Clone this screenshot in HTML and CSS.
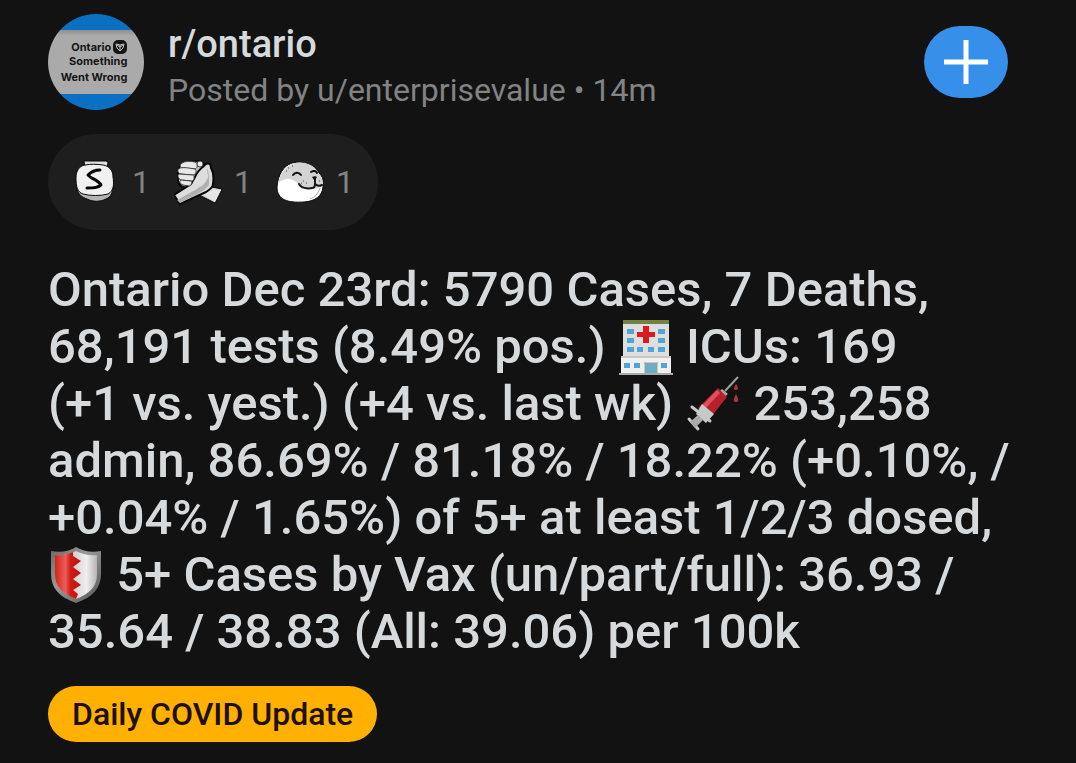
FILE: index.html
```html
<!DOCTYPE html>
<html lang="en">
<head>
<meta charset="utf-8">
<meta name="viewport" content="width=device-width, initial-scale=1">
<title>r/ontario</title>
<link rel="stylesheet" href="styles.css">
</head>
<body>

<article class="post">

<header class="post-header">
  <div class="avatar">
    <div class="avatar-text">
      <div class="avatar-line">Ontario
        <svg class="trillium" viewBox="0 0 14 14" aria-hidden="true">
          <rect width="14" height="14" rx="5" fill="#161616"/>
          <path d="M3 4l4 1 4-1-1 4-3 3-3-3zM7 5v5M4 5l3 2 3-2" fill="none" stroke="#c8c8c8"/>
        </svg>
      </div>
      <div class="avatar-line">Something</div>
      <div class="avatar-line last">Went Wrong</div>
    </div>
  </div>
  <div class="meta">
    <a class="subreddit" href="#">r/ontario</a>
    <div class="byline">Posted by u/enterprisevalue • 14m</div>
  </div>
  <button class="join" type="button" aria-label="Join">
    <svg viewBox="0 0 44 44" aria-hidden="true"><path d="M22 0v44M0 22h44" stroke="#fff" stroke-width="5"/></svg>
  </button>
</header>

<div class="awards">
  <div class="award">
    <svg viewBox="0 0 48 48" aria-hidden="true">
      <path d="M12 3h22l2 1-1 7H13z" fill="#dedede" stroke="#090909"/>
      <path d="M5 30c1 7 5 9 10 11 6 3 13 3 19 0 5-2 7-7 7-13z" fill="#b5b5b5" stroke="#090909"/>
      <path d="M13 7C7 8 4 13 4 20c0 8 1 14 7 16 7 2 18 2 25 0 6-3 6-10 5-17 0-7-4-11-10-12-7-1-12-1-18 0z" fill="#f1f1f1" stroke="#090909"/>
      <path d="M28 12c-5 0-9 2-12 5 2 3 10 5 13 10-3 3-8 3-14 3" fill="none" stroke="#050505" stroke-width="3" stroke-linecap="round" stroke-linejoin="round"/>
    </svg>
    <span>1</span>
  </div>
  <div class="award">
    <svg viewBox="0 0 48 48" aria-hidden="true">
      <path d="M28 27l20 4-7 14-18-9z" fill="#d0d0d0" stroke="#080808"/>
      <path d="M28 36l6-5 13 1-6 12z" fill="#e5e5e5"/>
      <path d="M4 12c1-5 6-8 11-8l10-1c4 0 6 3 5 7l-6 16-9 4c-6 0-10-3-11-7z" fill="#c4c4c4" stroke="#080808" stroke-width="2"/>
      <path d="M0 37l17-11 4-7c2-5 5-8 9-11 3-4 7-3 7 2 3 5 3 9 2 16 0 4-4 6-7 8L6 46z" fill="#ddd" stroke="#080808" stroke-width="2"/>
      <path d="M3 42l20-11c7-3 10-8 12-13v9c-3 4-5 5-8 7L6 45z" fill="#b0b0b0"/>
      <g fill="#e8e8e8" stroke="#404040">
        <path d="M8 5c3-2 8-2 13-1 3 1 3 6 0 7L10 10c-4 0-5-3-2-5z"/>
        <path d="M6 10c4-1 9 0 15 1 2 1 1 6-2 6L7 16c-4-1-4-5-1-6z"/>
        <path d="M5 16l14 1c2 1 1 6-1 6L7 22c-3-1-4-5-2-6z"/>
        <path d="M7 22l10 1c2 1 0 5-2 5l-6-1c-3-1-4-4-2-5z"/>
        <circle cx="26" cy="6" r="3"/>
      </g>
      <path d="M33 11l2 8-5 8-7 4" fill="none" stroke="#b4b4b4"/>
    </svg>
    <span>1</span>
  </div>
  <div class="award">
    <svg viewBox="0 0 48 48" aria-hidden="true">
      <path d="M1 29C2 17 7 8 16 5c12-3 23 2 27 10 4 4 5 8 4 14-1 9-7 14-19 15C12 45 1 42 1 29z" fill="#fff" stroke="#070707"/>
      <path d="M2 25C5 14 10 7 20 5c11-2 20 4 22 10 4 4 5 8 4 13-4 3-12 5-19 2-5-3-7-8-13-9-5-1-9 2-12 4z" fill="#d3d3d3"/>
      <path d="M17 17c2-3 6-3 8 0M35 14c3-2 5-1 6 1" fill="none" stroke="#111" stroke-width="2" stroke-linecap="round"/>
      <path d="M36 19c2-1 4-1 5 0l-2 3h-1z" fill="#111"/>
      <path d="M39 21v5M23 26c2 4 8 5 13 4 2 0 3-2 3-4 2 2 5 2 7 1" fill="none" stroke="#171717" stroke-linecap="round" stroke-width="2"/>
      <path d="M27 23h1M25 25h1M30 25h1M43 23h1M12 10h1M16 8h1M10 13h1" stroke="#444"/>
      <path d="M44 30c-2 6-5 9-10 11" fill="none" stroke="#aaa"/>
    </svg>
    <span>1</span>
  </div>
</div>

<h1 class="title">
  Ontario Dec 23rd: 5790 Cases, 7 Deaths,<br>
  68,191 tests (8.49% pos.)
  <svg class="emoji" viewBox="0 0 54 56" role="img" aria-label="hospital">
    <path d="M4 2h46v37H4z" fill="#dedfdd"/>
    <path d="M4 1h46v4H4z" fill="#75813f"/>
    <path d="M2 38h50v16H2z" fill="#f0f0ef"/>
    <path d="M2 37h50v2H2z" fill="#c8c6c8"/>
    <path d="M0 54h54v2H0z" fill="#aaa9ae"/>
    <path d="M24 7h6v6h6v5h-6v6h-6v-6h-6v-5h6z" fill="#d91b21"/>
    <path d="M8 10h7v5H8zM39 10h7v5h-7zM8 19h7v5H8zM39 19h7v5h-7zM8 28h7v5H8zM18 28h6v5h-6zM29 28h6v5h-6zM39 28h7v5h-7zM5 44h6v5H5zM15 44h6v5h-6zM42 44h6v5h-6z" fill="#4da5dc"/>
    <path d="M26 44h12v10H26z" fill="#65b2c4"/>
    <path d="M25 44h14M26 44v10M32 45v9M38 44v10" stroke="#9b9ea2" stroke-width="1"/>
  </svg>
  ICUs: 169<br>
  (+1 vs. yest.) (+4 vs. last wk)
  <svg class="emoji" viewBox="0 0 54 56" role="img" aria-label="syringe">
    <path d="M39 15L52 1" stroke="#9e9fa1" stroke-width="2"/>
    <path d="M36 13l6 5-6 5-5-6z" fill="#a4aaa5"/>
    <path d="M32 12l9 9-17 21-12-10z" fill="#b7202c"/>
    <path d="M31 14l3 3-17 18-3-3z" fill="#e0525a"/>
    <path d="M16 28l12 10-8 9-10-9z" fill="#c8c9ca"/>
    <path d="M6 31l18 14M3 43l9 10" stroke="#c8c8c8" stroke-width="3" stroke-linecap="round"/>
    <path d="M12 39l5 5-8 8-5-6z" fill="#aaa"/>
    <path d="M50 8c-3 5-2 6 0 6s3-2 0-6zM50 18c-3 6-3 8 0 8s3-2 0-8z" fill="#b8323b"/>
  </svg>
  253,258<br>
  admin, 86.69% / 81.18% / 18.22% (+0.10%, /<br>
  +0.04% / 1.65%) of 5+ at least 1/2/3 dosed,<br>
  <svg class="emoji" viewBox="0 0 54 56" role="img" aria-label="shield">
    <defs>
      <linearGradient id="rim" x2="1" y2="1"><stop stop-color="#666"/><stop offset=".4" stop-color="#999"/><stop offset="1" stop-color="#555"/></linearGradient>
      <linearGradient id="red"><stop stop-color="#d9201a"/><stop offset=".4" stop-color="#ea5f5a"/><stop offset=".6" stop-color="#cf1a15"/><stop offset="1" stop-color="#c5120d"/></linearGradient>
      <linearGradient id="silver"><stop stop-color="#aaa"/><stop offset=".75" stop-color="#eee"/><stop offset="1" stop-color="#b5b5b5"/></linearGradient>
    </defs>
    <path d="M2 4c10 2 19 0 25-4 7 4 15 6 25 4v23c0 14-8 23-25 29C10 50 2 41 2 27z" fill="url(#rim)"/>
    <path d="M6 8c8 1 15-1 21-4 6 3 13 5 21 4v19c0 12-6 19-21 25C12 46 6 39 6 27z" fill="url(#silver)"/>
    <path d="M6 8c7 1 13-1 18-3v4l8 5-8 6 8 6-8 6 8 6-8 5 5 4-2 5C12 46 6 39 6 27z" fill="url(#red)"/>
  </svg>
  5+ Cases by Vax (un/part/full): 36.93 /<br>
  35.64 / 38.83 (All: 39.06) per 100k
</h1>

<a class="flair" href="#">Daily COVID Update</a>

</article>

</body>
</html>
```
FILE: styles.css
```css
body {
  margin: 0;
  background: #121212;
  color: #d7dadc;
  font-family: Roboto, sans-serif;
}

.post {
  padding: 14px 48px 20px;
}

.post-header {
  display: flex;
  align-items: center;
  padding-right: 20px;
}

.avatar {
  display: flex;
  align-items: center;
  justify-content: center;
  box-sizing: border-box;
  width: 96px;
  height: 96px;
  padding-right: 4px;
  border-radius: 50%;
  background: linear-gradient(#0b70c2 16px, #8f8f8f 16px, #aaa 22px, #aaa 80px, #0b70c2 80px);
}

.avatar-text {
  color: #161616;
  font: bold 11px/14px Inter, sans-serif;
}

.avatar-line {
  display: flex;
  align-items: center;
  justify-content: flex-end;
  gap: 2px;
}

.avatar-line.last {
  padding-top: 2px;
}

.trillium {
  width: 14px;
  height: 14px;
}

.meta {
  display: flex;
  flex: 1;
  flex-direction: column;
  gap: 4px;
  padding: 8px 0 0 24px;
}

.subreddit {
  color: #d7dadc;
  font-size: 38px;
  font-weight: 500;
  line-height: 44px;
  text-decoration: none;
}

.byline {
  color: #818384;
  font-size: 32px;
  line-height: 40px;
}

.join {
  display: flex;
  align-items: center;
  justify-content: center;
  width: 84px;
  height: 72px;
  padding: 0;
  border: none;
  border-radius: 36px;
  background: #368fe9;
}

.join svg {
  width: 44px;
  height: 44px;
}

.awards {
  display: inline-flex;
  gap: 24px;
  margin-top: 24px;
  padding: 24px;
  border-radius: 48px;
  background: #1e1e1e;
}

.award {
  display: flex;
  align-items: center;
  gap: 12px;
  color: #818384;
  font-size: 32px;
  line-height: 48px;
}

.award svg {
  width: 48px;
  height: 48px;
}

.title {
  margin: 31px 0 26px;
  font-size: 49px;
  font-weight: 500;
  line-height: 57px;
}

.emoji {
  width: 54px;
  height: 56px;
  margin: 0 1px;
  vertical-align: -12px;
}

.flair {
  display: inline-block;
  padding: 0 24px;
  border-radius: 28px;
  background: #ffb000;
  color: #1c1008;
  font-size: 32px;
  font-weight: 500;
  line-height: 56px;
  text-decoration: none;
}
```
